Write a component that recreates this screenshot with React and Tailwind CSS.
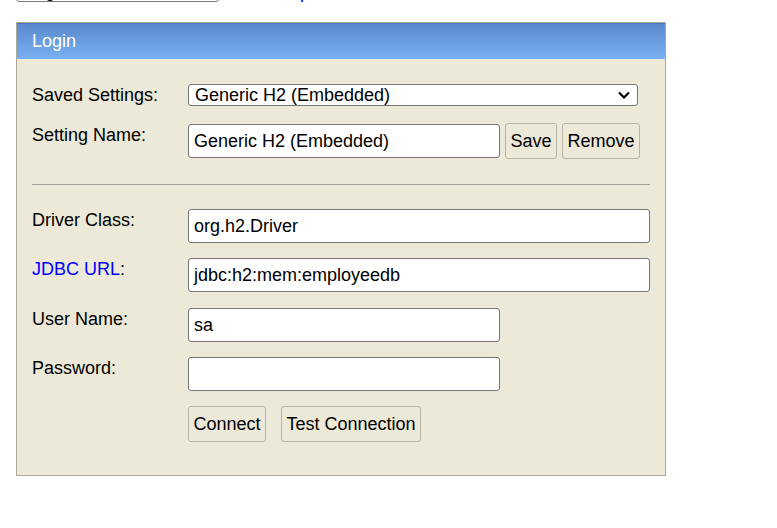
import React from "react";

const font = { fontFamily: '"Liberation Sans", Arial, sans-serif' };

function Label({ children, className = "" }) {
  return (
    <div className={"w-[156px] shrink-0 text-[18px] leading-[20px] text-black " + className}>
      {children}
    </div>
  );
}

function TextInput({ value, w }) {
  return (
    <div
      className={
        "h-[34px] rounded-[3px] border border-[#767676] bg-white pl-[5px] flex items-center text-[18px] text-black " +
        w
      }
    >
      {value}
    </div>
  );
}

function Btn({ children, className = "" }) {
  return (
    <div
      className={
        "h-[36px] rounded-[3px] border border-[#b8b4a4] bg-[#ece9d8] flex items-center justify-center whitespace-nowrap text-[18px] text-black " +
        className
      }
    >
      {children}
    </div>
  );
}

export default function App() {
  return (
    <div className="min-h-[528px] bg-white" style={font}>
      {/* top bar, mostly scrolled out of view */}
      <div className="flex items-end mt-[-20px] h-[22px]">
        <div className="ml-[16px] w-[203px] h-[22px] rounded-[3px] border border-[#767676] bg-white pl-[6px] text-[18px] leading-[20px] text-black">
          English
        </div>
        <span className="ml-[54px] text-[18px] leading-[20px] text-[#0000ee]">Help</span>
      </div>

      {/* login panel */}
      <div className="ml-[16px] mt-[20px] w-[650px] border border-[#aca899] bg-[#ece9d8]">
        <div className="h-[36px] border-t border-[#4a78bc] bg-gradient-to-b from-[#5a89cd] to-[#79b1f2] pl-[15px] flex items-center text-[18px] text-white">
          Login
        </div>

        <div className="px-[15px] pb-[33px]">
          {/* Saved settings */}
          <div className="flex items-start mt-[25px]">
            <Label className="pt-[1px]">Saved Settings:</Label>
            <div className="w-[450px] h-[22px] rounded-[3px] border border-[#767676] bg-white pl-[6px] pr-[5px] flex items-center justify-between text-[18px] text-black">
              <span>Generic H2 (Embedded)</span>
              <svg width="14" height="10" viewBox="0 0 14 10" className="mr-[1px]">
                <path d="M2 2.5 L7 7.5 L12 2.5" fill="none" stroke="#000" strokeWidth="2.2" />
              </svg>
            </div>
          </div>

          {/* Setting name */}
          <div className="flex items-start mt-[17px]">
            <Label className="pt-[2px]">Setting Name:</Label>
            <div className="mt-[1px]">
              <TextInput value="Generic H2 (Embedded)" w="w-[312px]" />
            </div>
            <Btn className="ml-[5px] w-[52px] h-[35px]">Save</Btn>
            <Btn className="ml-[5px] w-[78px] h-[35px]">Remove</Btn>
          </div>

          <div className="mt-[25px] h-px bg-[#a09f98]" />

          {/* Driver class */}
          <div className="flex items-start mt-[24px]">
            <Label className="pt-[1px]">Driver Class:</Label>
            <TextInput value="org.h2.Driver" w="w-[462px]" />
          </div>

          <div className="flex items-start mt-[15px]">
            <Label className="pt-[1px]">
              <span className="text-[#0000ff]">JDBC URL</span>:
            </Label>
            <TextInput value="jdbc:h2:mem:employeedb" w="w-[462px]" />
          </div>

          <div className="flex items-start mt-[16px]">
            <Label className="pt-[1px]">User Name:</Label>
            <TextInput value="sa" w="w-[312px]" />
          </div>

          <div className="flex items-start mt-[15px]">
            <Label className="pt-[1px]">Password:</Label>
            <TextInput value="" w="w-[312px]" />
          </div>

          <div className="flex items-start mt-[15px] pl-[156px]">
            <Btn className="w-[78px]">Connect</Btn>
            <Btn className="ml-[15px] w-[140px]">Test Connection</Btn>
          </div>
        </div>
      </div>
    </div>
  );
}
